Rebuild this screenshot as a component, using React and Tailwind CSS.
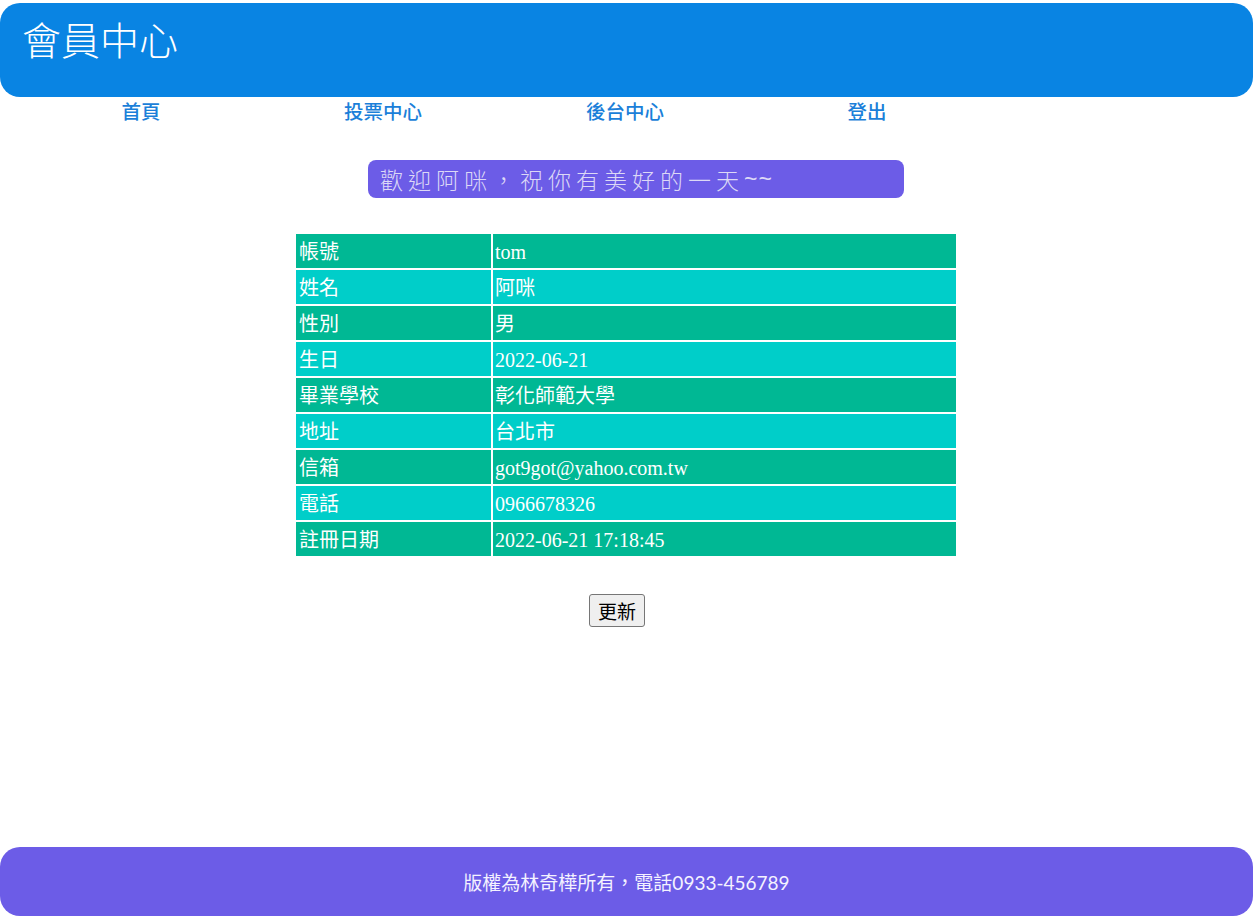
const rows = [
  ['帳號', 'tom'],
  ['姓名', '阿咪'],
  ['性別', '男'],
  ['生日', '2022-06-21'],
  ['畢業學校', '彰化師範大學'],
  ['地址', '台北市'],
  ['信箱', 'got9got@yahoo.com.tw'],
  ['電話', '0966678326'],
  ['註冊日期', '2022-06-21 17:18:45'],
];

const navLinks = ['首頁', '投票中心', '後台中心', '登出'];

export default function App() {
  return (
    <div className="min-h-[917px] w-[1253px] flex flex-col bg-white font-['Liberation_Serif','Noto_Sans_CJK_TC',serif]">
      {/* header */}
      <header className="mt-[3px] h-[94px] rounded-[20px] bg-[#0984e3] pl-[22px] pt-[12px]">
        <h1 className="text-[39px] leading-[46px] text-white font-['Noto_Sans_CJK_TC',sans-serif] font-light">會員中心</h1>
      </header>

      {/* nav */}
      <nav className="flex pl-[20px] h-[27px] items-center">
        {navLinks.map((label) => (
          <a
            key={label}
            href="#"
            className="w-[242px] text-center text-[19.5px] font-medium text-[#1b7fd9] font-['Noto_Sans_CJK_TC',sans-serif]"
          >
            {label}
          </a>
        ))}
      </nav>

      {/* welcome */}
      <div className="flex mt-[36px] pl-[368px]">
        <div className="w-[536px] h-[38px] rounded-[8px] bg-[#6c5ce7] pl-[12px] flex items-center text-[23px] tracking-[5px] text-[#dcd8f6] font-['Noto_Sans_CJK_TC',sans-serif] font-light">
          歡迎阿咪，祝你有美好的一天<span className="font-['Liberation_Sans',sans-serif] tracking-[1px]">~~</span>
        </div>
      </div>

      {/* member data */}
      <table className="ml-[294px] mt-[34px] w-[664px] border-separate border-spacing-[2px] text-[20px] text-white">
        <tbody>
          {rows.map(([k, v], i) => (
            <tr key={k} className={i % 2 === 0 ? 'bg-[#00b894]' : 'bg-[#00cec9]'}>
              <td className="w-[195px] h-[34px] pl-[3px] p-0 pt-[2px]">{k}</td>
              <td className="h-[34px] pl-[2px] p-0 pt-[2px]">{v}</td>
            </tr>
          ))}
        </tbody>
      </table>

      <div className="flex mt-[36px] pl-[589px]">
        <button className="h-[33px] w-[56px] text-[19px] leading-none bg-[#efefef] border border-[#767676] rounded-[3px] text-black font-['Noto_Sans_CJK_TC',sans-serif]">
          更新
        </button>
      </div>

      {/* footer */}
      <footer className="mt-auto mb-[1px] h-[69px] rounded-[20px] bg-[#6c5ce7] flex items-center justify-center pt-[4px] text-[19px] text-[#f4f2ff] font-['Lato','Noto_Sans_CJK_TC',sans-serif]">
        版權為林奇樺所有，電話0933-456789
      </footer>
    </div>
  );
}
